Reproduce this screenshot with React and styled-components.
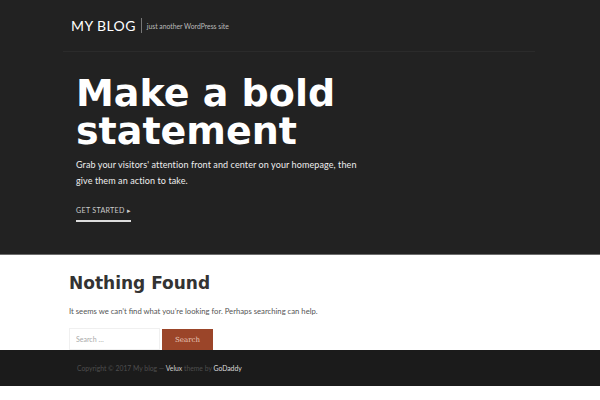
import React from "react";
import styled, { createGlobalStyle } from "styled-components";

const GlobalStyle = createGlobalStyle`
  body {
    margin: 0;
    background: #ffffff;
    font-family: Lato, sans-serif;
  }
`

const Masthead = styled.div`
  background-color: #222222;
  border-bottom: 1px solid #6c6c6c;
`
const HeaderBar = styled.header`
  margin: 0 65px 0 63px;
  height: 51px;
  border-bottom: 1px solid #2b2b2b;
  display: flex;
  align-items: center;
  padding-left: 8px;
`
const SiteTitle = styled.h1`
  margin: 0;
  font-family: Lato, sans-serif;
  font-weight: 400;
  font-size: 14px;
  letter-spacing: 0.4px;
  color: #ffffff;
  padding-right: 5px;
  border-right: 1px solid #777;
  line-height: 15px;
`
const Tagline = styled.span`
  font-size: 6.8px;
  color: #bbbbbb;
  padding-left: 5px;
`
const Hero = styled.section`
  padding: 22px 0 32px 76px;
`
const HeroTitle = styled.h2`
  margin: 0;
  font-family: "DejaVu Sans", sans-serif;
  font-weight: 700;
  font-size: 38px;
  line-height: 38px;
  color: #ffffff;
`
const HeroText = styled.p`
  margin: 7px 0 0;
  width: 288px;
  font-size: 9px;
  line-height: 16px;
  color: #eeeeee;
  letter-spacing: 0.1px;
`
const CtaLink = styled.a`
  display: inline-block;
  margin-top: 17px;
  font-size: 7.1px;
  color: #cccccc;
  text-decoration: none;
  padding-bottom: 5px;
  border-bottom: 2px solid #dddddd;
  letter-spacing: 0.3px;
`
const Main = styled.main`
  padding: 16px 0 0 69px;
  height: 79px;
`
const PageTitle = styled.h2`
  margin: 0;
  font-family: "DejaVu Sans", sans-serif;
  font-weight: 700;
  font-size: 17px;
  line-height: 24px;
  color: #333333;
`
const Message = styled.p`
  margin: 11px 0 0;
  font-size: 7.7px;
  color: #555555;
`
const SearchForm = styled.form`
  display: flex;
  gap: 2px;
  margin-top: 12px;
`
const SearchInput = styled.input`
  box-sizing: border-box;
  width: 91px;
  height: 22px;
  border: 1px solid #f0f0f0;
  padding: 0 6px;
  font-family: Lato, sans-serif;
  font-size: 7px;
  outline: none;
  &::placeholder {
    color: #aaaaaa;
  }
`
const SearchButton = styled.button`
  width: 51px;
  height: 21px;
  margin-top: 1px;
  border: none;
  background: #9b4529;
  color: #e9c9bb;
  font-family: "DejaVu Serif", serif;
  font-size: 7px;
`
const Footer = styled.footer`
  background: #1b1b1b;
  height: 36px;
  display: flex;
  align-items: center;
  padding-left: 77px;
  font-size: 6.8px;
  color: #4e4e4e;
`
const FooterLink = styled.a`
  color: ${props => props.bright ? "#dddddd" : "#cfcfcf"};
  text-decoration: none;
`

const App = () => {
  return (
    <>
      <GlobalStyle />
      <Masthead>
        <HeaderBar>
          <SiteTitle>MY BLOG</SiteTitle>
          <Tagline>just another WordPress site</Tagline>
        </HeaderBar>
        <Hero>
          <HeroTitle>Make a bold<br />statement</HeroTitle>
          <HeroText>Grab your visitors' attention front and center on your homepage, then give them an action to take.</HeroText>
          <CtaLink href="#">GET STARTED ▸</CtaLink>
        </Hero>
      </Masthead>
      <Main>
        <PageTitle>Nothing Found</PageTitle>
        <Message>It seems we can’t find what you’re looking for. Perhaps searching can help.</Message>
        <SearchForm onSubmit={e => e.preventDefault()}>
          <SearchInput placeholder="Search …" />
          <SearchButton>Search</SearchButton>
        </SearchForm>
      </Main>
      <Footer>
        <span>
          Copyright © 2017 My blog — <FooterLink href="#">Velux</FooterLink> theme by <FooterLink href="#" bright>GoDaddy</FooterLink>
        </span>
      </Footer>
    </>
  )
}

export default App
